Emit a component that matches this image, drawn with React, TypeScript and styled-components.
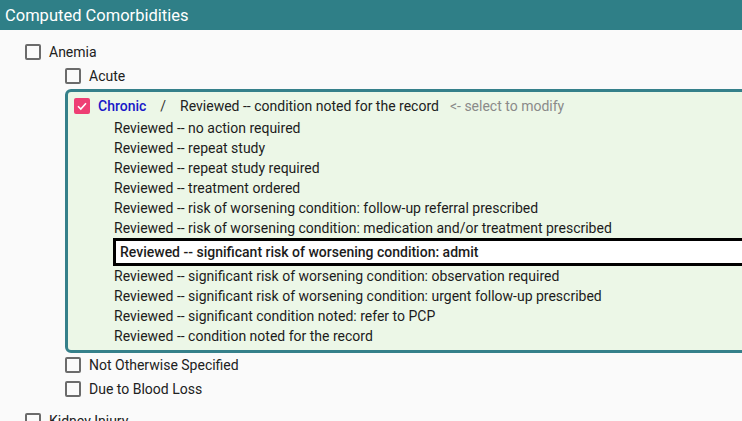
import React from "react";
import styled, { createGlobalStyle } from "styled-components";

const Global = createGlobalStyle`
  html, body { margin: 0; padding: 0; background: #fafafa; overflow: hidden; }
  body { font-family: Roboto, "Liberation Sans", Arial, sans-serif; color: #212121; }
`;

const Page = styled.div`
  width: 742px;
  height: 421px;
  overflow: hidden;
  background: #fafafa;
`;

const Header = styled.div`
  height: 30px;
  background: #2f7f87;
  color: #ffffff;
  font-size: 16.5px;
  display: flex;
  align-items: center;
  padding-left: 5px;
`;

const Content = styled.div`
  padding: 10px 0 0 25px;
  display: flex;
  flex-direction: column;
`;

const Group = styled.div`
  display: flex;
  flex-direction: column;
  margin-bottom: 8px;
`;

const Row = styled.div`
  height: 24px;
  display: flex;
  align-items: center;
  gap: 8px;
  font-size: 14px;
`;

const Box = styled.span<{ $checked?: boolean }>`
  width: 16px;
  height: 16px;
  box-sizing: border-box;
  border-radius: 2px;
  flex: none;
  display: flex;
  align-items: center;
  justify-content: center;
  border: ${(p) => (p.$checked ? "none" : "2px solid #6b6b6b")};
  background: ${(p) => (p.$checked ? "#ee3f74" : "transparent")};
`;

const Children = styled.div`
  display: flex;
  flex-direction: column;
  padding-left: 40px;
`;

const Panel = styled.div`
  margin-top: 1px;
  margin-right: -80px;
  border: 3px solid #35808a;
  border-radius: 6px;
  background: #ecf7e7;
  padding: 1px 0 4px 6px;
  display: flex;
  flex-direction: column;
`;

const PanelHead = styled.div`
  height: 25px;
  display: flex;
  align-items: center;
  font-size: 14px;
`;

const Name = styled.span`
  color: #1818c8;
  font-weight: 500;
  margin-left: 8px;
`;

const Slash = styled.span`
  margin: 0 14px 0 14px;
  color: #333;
`;

const Hint = styled.span`
  color: #8a8a8a;
  margin-left: 11px;
`;

const Options = styled.div`
  display: flex;
  flex-direction: column;
  padding-left: 40px;
`;

const Option = styled.div<{ $selected?: boolean }>`
  font-size: 14px;
  display: flex;
  align-items: center;
  box-sizing: border-box;
  height: ${(p) => (p.$selected ? "28px" : "20px")};
  padding-left: ${(p) => (p.$selected ? "4px" : "0")};
  margin-left: ${(p) => (p.$selected ? "-1px" : "0")};
  border: ${(p) => (p.$selected ? "3px solid #000" : "none")};
  background: ${(p) => (p.$selected ? "#ffffff" : "transparent")};
  font-weight: ${(p) => (p.$selected ? 500 : 400)};
  color: #1c1c1c;
`;

const Check = () => (
  <svg width="12" height="12" viewBox="0 0 12 12">
    <path d="M2 6.2 L4.8 9 L10 3.2" fill="none" stroke="#fff" strokeWidth="1.6" />
  </svg>
);

const options = [
  "Reviewed -- no action required",
  "Reviewed -- repeat study",
  "Reviewed -- repeat study required",
  "Reviewed -- treatment ordered",
  "Reviewed -- risk of worsening condition: follow-up referral prescribed",
  "Reviewed -- risk of worsening condition: medication and/or treatment prescribed",
  "Reviewed -- significant risk of worsening condition: admit",
  "Reviewed -- significant risk of worsening condition: observation required",
  "Reviewed -- significant risk of worsening condition: urgent follow-up prescribed",
  "Reviewed -- significant condition noted: refer to PCP",
  "Reviewed -- condition noted for the record",
];

export default function App() {
  return (
    <Page>
      <Global />
      <Header>Computed Comorbidities</Header>
      <Content>
        <Group>
          <Row>
            <Box />
            Anemia
          </Row>
          <Children>
            <Row>
              <Box />
              Acute
            </Row>
            <Panel>
              <PanelHead>
                <Box $checked>
                  <Check />
                </Box>
                <Name>Chronic</Name>
                <Slash>/</Slash>
                Reviewed -- condition noted for the record
                <Hint>&lt;- select to modify</Hint>
              </PanelHead>
              <Options>
                {options.map((o, i) => (
                  <Option key={i} $selected={i === 6}>
                    {o}
                  </Option>
                ))}
              </Options>
            </Panel>
            <Row>
              <Box />
              Not Otherwise Specified
            </Row>
            <Row>
              <Box />
              Due to Blood Loss
            </Row>
          </Children>
        </Group>
        <Row>
          <Box />
          Kidney Injury
        </Row>
      </Content>
    </Page>
  );
}
